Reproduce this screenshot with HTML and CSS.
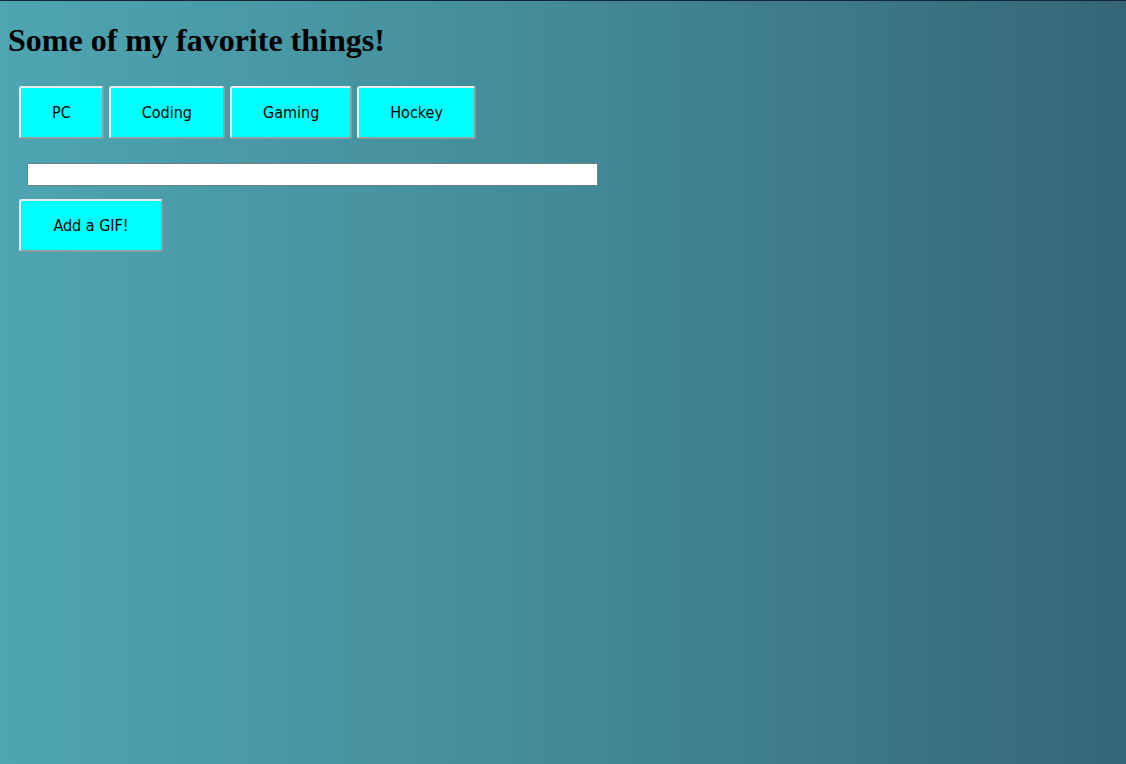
FILE: index.html
```html
<!DOCTYPE html>
<html lang="en">
<head>
<meta charset="utf-8">
<title>Some of my favorite things!</title>
<link rel="stylesheet" href="styles.css">
</head>
<body>
<div class="page">
  <h1 class="title">Some of my favorite things!</h1>
  <div class="topics">
    <button class="btn">PC</button>
    <button class="btn">Coding</button>
    <button class="btn">Gaming</button>
    <button class="btn">Hockey</button>
  </div>
  <form class="add-form">
    <input class="topic-input" type="text">
    <button class="btn add-btn" type="button">Add a GIF!</button>
  </form>
</div>
</body>
</html>
```
FILE: styles.css
```css
html, body {
  margin: 0;
  padding: 0;
  height: 100%;
}
body {
  background: linear-gradient(to right, #4ea5b1 0%, #438a98 50%, #356678 100%);
  font-family: "Liberation Serif", "Times New Roman", serif;
}
.page {
  border-top: 1px solid #142536;
  min-height: 100%;
  box-sizing: border-box;
  padding: 0 8px;
}
.title {
  margin: 21px 0 0;
  font-size: 32px;
  font-weight: bold;
  line-height: 37px;
  color: #000;
}
.topics {
  display: flex;
  gap: 5px;
  margin: 27px 0 0 11px;
}
.btn {
  box-sizing: border-box;
  height: 53px;
  background: #00ffff;
  border: 2px solid;
  border-color: #e4eeee #8d9da0 #8d9da0 #e4eeee;
  border-radius: 3px;
  font-family: "DejaVu Sans Condensed", "DejaVu Sans", sans-serif;
  font-size: 16px;
  color: #000;
  padding: 0 31px;
}
.add-form {
  display: flex;
  flex-direction: column;
  align-items: flex-start;
  margin: 24px 0 0 11px;
}
.topic-input {
  box-sizing: border-box;
  width: 571px;
  height: 23px;
  margin: 0 0 0 8px;
  border: 1px solid #6f7f84;
  background: #fff;
  padding: 0 4px;
}
.add-btn {
  margin-top: 13px;
  width: 144px;
  padding: 0;
}
```
